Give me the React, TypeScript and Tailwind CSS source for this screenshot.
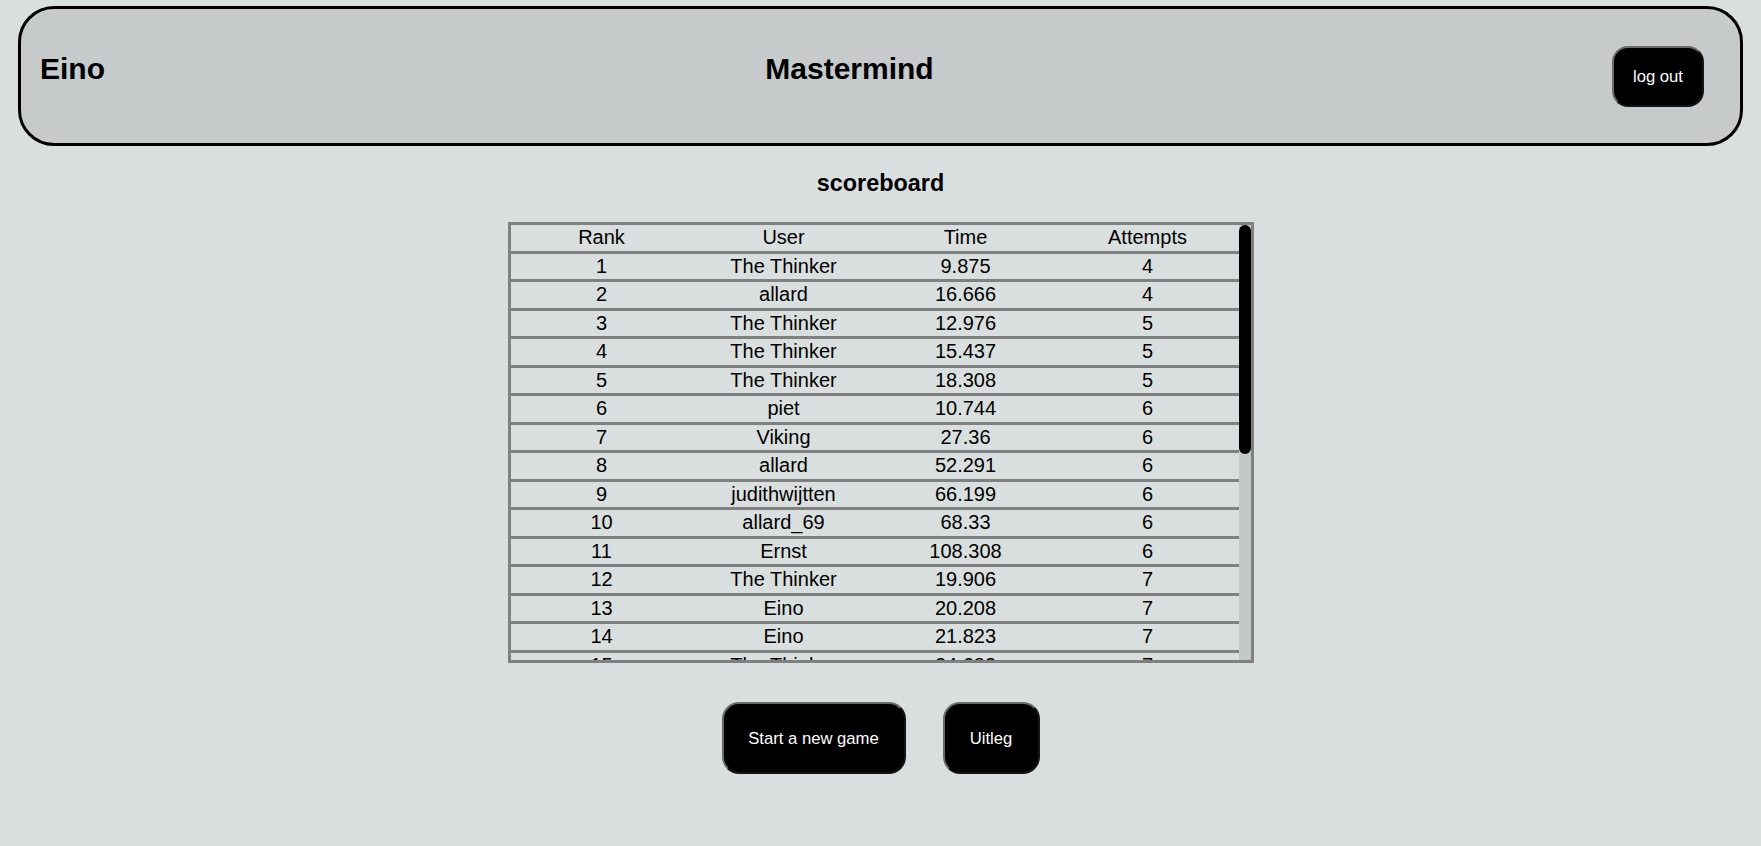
import React from "react";

const rows: [number, string, string, number][] = [
  [1, "The Thinker", "9.875", 4],
  [2, "allard", "16.666", 4],
  [3, "The Thinker", "12.976", 5],
  [4, "The Thinker", "15.437", 5],
  [5, "The Thinker", "18.308", 5],
  [6, "piet", "10.744", 6],
  [7, "Viking", "27.36", 6],
  [8, "allard", "52.291", 6],
  [9, "judithwijtten", "66.199", 6],
  [10, "allard_69", "68.33", 6],
  [11, "Ernst", "108.308", 6],
  [12, "The Thinker", "19.906", 7],
  [13, "Eino", "20.208", 7],
  [14, "Eino", "21.823", 7],
  [15, "The Thinker", "24.683", 7],
  [16, "allard", "29.514", 7],
  [17, "piet", "33.072", 7],
  [18, "Viking", "41.25", 7],
  [19, "Eino", "45.918", 7],
  [20, "The Thinker", "17.402", 8],
  [21, "allard_69", "38.77", 8],
  [22, "Ernst", "56.103", 8],
  [23, "judithwijtten", "71.486", 8],
  [24, "Eino", "23.645", 9],
  [25, "piet", "48.201", 9],
  [26, "The Thinker", "30.119", 10],
  [27, "allard", "62.835", 10],
  [28, "Viking", "89.4", 11],
];

function Cell({ children }: { children: React.ReactNode }) {
  return (
    <td className="text-center text-[20px] leading-[23px] py-[1.25px] px-0 text-black font-normal whitespace-nowrap">
      {children}
    </td>
  );
}

export default function App() {
  return (
    <div
      className="min-h-[846px] w-full bg-[#d9dfde] pt-[6px] overflow-hidden"
      style={{ fontFamily: '"Liberation Sans", Arial, sans-serif' }}
    >
      <header className="mx-[18px] h-[140px] border-[3px] border-black rounded-[36px] bg-[#c6cacb] flex items-center justify-between pl-[19px] pr-[18px]">
        <h2 className="text-[30px] font-bold leading-[normal] mb-[15px] text-black">Eino</h2>
        <h2 className="text-[30px] font-bold leading-[normal] mb-[15px] text-black">Mastermind</h2>
        <button className="mx-[18px] w-[92px] h-[61px] rounded-[16px] bg-black text-white text-[16.67px] border-2 [border-style:outset] border-[#6a6a6a] flex items-center justify-center">
          log out
        </button>
      </header>

      <h3 className="mt-[24px] mb-[25px] text-center text-[23.4px] font-bold leading-[normal] text-black">
        scoreboard
      </h3>

      <div className="mx-auto w-[746px] h-[441px] border-[3px] border-[#808080] flex">
        <div className="flex-1 overflow-hidden">
          <table className="w-full table-fixed border-collapse">
            <tbody>
              <tr className="border-b-[3px] border-[#808080]">
                <Cell>Rank</Cell>
                <Cell>User</Cell>
                <Cell>Time</Cell>
                <Cell>Attempts</Cell>
              </tr>
              {rows.map((r) => (
                <tr key={r[0]} className="border-b-[3px] border-[#808080]">
                  <Cell>{r[0]}</Cell>
                  <Cell>{r[1]}</Cell>
                  <Cell>{r[2]}</Cell>
                  <Cell>{r[3]}</Cell>
                </tr>
              ))}
            </tbody>
          </table>
        </div>
        <div className="w-[12px] bg-[#c4c8c9] flex flex-col">
          <div className="h-[229px] w-full bg-black rounded-[6px]" />
        </div>
      </div>

      <div className="mt-[39px] flex justify-center gap-[37px]">
        <button className="w-[184px] h-[72px] rounded-[17px] bg-black text-white text-[16.67px] border-2 [border-style:outset] border-[#6a6a6a] flex items-center justify-center">
          Start a new game
        </button>
        <button className="w-[97px] h-[72px] rounded-[17px] bg-black text-white text-[16.67px] border-2 [border-style:outset] border-[#6a6a6a] flex items-center justify-center">
          Uitleg
        </button>
      </div>
    </div>
  );
}
